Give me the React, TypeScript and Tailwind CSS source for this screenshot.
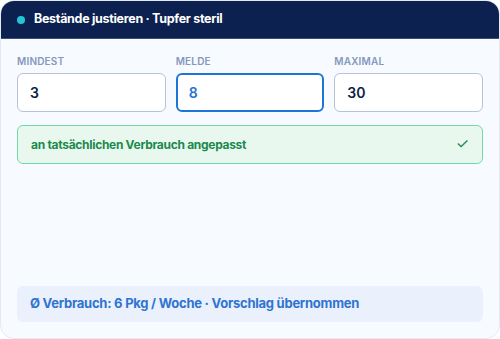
import React from "react";

export default function App() {
  const font = { fontFamily: "Inter, 'Noto Sans', sans-serif" };
  return (
    <div className="w-[500px] h-[339px] bg-white" style={font}>
      <div className="w-[500px] h-[339px] rounded-[14px] border border-[#e3eaf5] bg-[#f7faff] overflow-hidden flex flex-col">
        <div className="h-[38px] bg-[#0c2150] border-b border-[#3b4f7a] flex items-center pl-[16px] gap-[9px] shrink-0">
          <span className="w-[8px] h-[8px] rounded-full bg-[#22c7d6]" />
          <span className="text-white font-bold text-[12.5px] tracking-[-0.3px]">Bestände justieren · Tupfer steril</span>
        </div>
        <div className="flex-1 flex flex-col px-[16px] pt-[16px] pb-[16px]">
          <div className="grid grid-cols-3 gap-[10px]">
            {[
              { l: "MINDEST", v: "3", a: false },
              { l: "MELDE", v: "8", a: true },
              { l: "MAXIMAL", v: "30", a: false },
            ].map((f) => (
              <div key={f.l} className="flex flex-col">
                <div className="text-[10px] font-semibold text-[#8598bd] tracking-[0.2px] leading-[13px] mb-[5px]">{f.l}</div>
                <div
                  className={
                    f.a
                      ? "h-[39px] rounded-[6px] border-2 border-[#1f74d8] bg-white flex items-center pl-[11px] text-[14px] font-semibold text-[#2a73d0]"
                      : "h-[39px] rounded-[6px] border border-[#b7c3da] bg-white flex items-center pl-[12px] text-[14px] font-semibold text-[#0f1f47]"
                  }
                >
                  {f.v}
                </div>
              </div>
            ))}
          </div>
          <div className="mt-[13px] h-[39px] rounded-[6px] border border-[#6fdba8] bg-[#e9f8ef] flex items-center justify-between pl-[13px] pr-[13px]">
            <span className="text-[12px] font-bold tracking-[-0.3px] text-[#1a8a4c]">an tatsächlichen Verbrauch angepasst</span>
            <span className="text-[15px] font-normal text-[#1a8a4c]">✓</span>
          </div>
          <div className="flex-1" />
          <div className="h-[36px] rounded-[6px] bg-[#eaf1fd] flex items-center pl-[13px]">
            <span className="text-[13px] font-bold tracking-[-0.25px] text-[#2f74d0]">Ø Verbrauch: 6 Pkg / Woche · Vorschlag übernommen</span>
          </div>
        </div>
      </div>
    </div>
  );
}
